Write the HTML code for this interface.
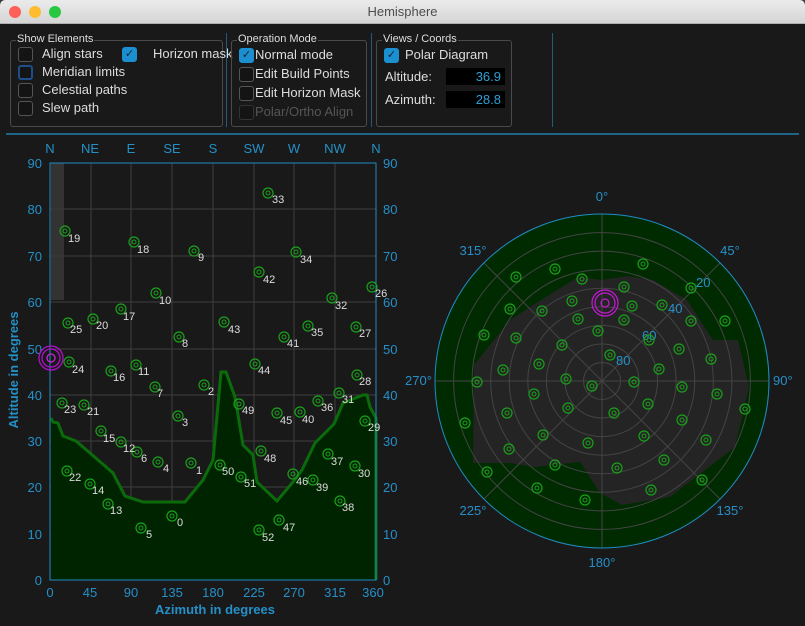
<!DOCTYPE html>
<html><head><meta charset="utf-8"><style>
body{margin:0;width:805px;height:626px;background:#3a3a3a;font-family:"Liberation Sans",sans-serif;overflow:hidden;position:relative}
.win{position:absolute;left:0;top:0;width:805px;height:626px;background:#191919;border-radius:5px 5px 0 0;overflow:hidden}
.title{position:absolute;left:0;top:0;width:805px;height:23px;background:linear-gradient(#ebebeb,#d5d5d5);border-bottom:1px solid #b0b0b0;text-align:center;font-size:13px;line-height:23px;color:#4d4d4d}
.dot{position:absolute;top:6px;width:12px;height:12px;border-radius:50%}
.box{position:absolute;border:1px solid #4a4a4a;border-radius:3px}
.lg{position:absolute;top:-8px;left:5px;background:#191919;color:#ddd;font-size:11px;padding:0 1px}
.cb{position:absolute;width:13px;height:13px;border:1px solid #555;border-radius:3px;background:#141414}
.cb.on{background:#1b8fcf;border-color:#1b8fcf;color:#123;font-size:11px;line-height:13px;text-align:center}
.t{position:absolute;color:#ddd;font-size:13px;white-space:nowrap}
.fld{position:absolute;background:#000;color:#2a9fd6;font-size:13px;text-align:right;padding-right:4px;box-sizing:border-box;height:17px;line-height:17px;width:59px}
.vl{position:absolute;top:33px;width:1px;height:94px;background:#1f5d7a}
</style></head><body><div class="win">
<div class="title">Hemisphere</div>
<div class="dot" style="left:9px;background:#fe5f57"></div>
<div class="dot" style="left:29px;background:#febc2e"></div>
<div class="dot" style="left:49px;background:#28c840"></div>

<div class="box" style="left:10px;top:40px;width:211px;height:85px"><span class="lg">Show Elements</span></div>
<div class="cb" style="left:18px;top:47px"></div><div class="t" style="left:42px;top:46px">Align stars</div>
<div class="cb on" style="left:122px;top:47px">✓</div><div class="t" style="left:153px;top:46px">Horizon mask</div>
<div class="cb" style="left:18px;top:65px;border:2px solid #1d4d8a;width:11px;height:11px"></div><div class="t" style="left:42px;top:64px">Meridian limits</div>
<div class="cb" style="left:18px;top:83px"></div><div class="t" style="left:42px;top:82px">Celestial paths</div>
<div class="cb" style="left:18px;top:101px"></div><div class="t" style="left:42px;top:100px">Slew path</div>
<div class="vl" style="left:226px"></div>
<div class="box" style="left:231px;top:40px;width:134px;height:85px"><span class="lg">Operation Mode</span></div>
<div class="cb on" style="left:239px;top:48px">✓</div><div class="t" style="left:255px;top:47px">Normal mode</div>
<div class="cb" style="left:239px;top:67px"></div><div class="t" style="left:255px;top:66px">Edit Build Points</div>
<div class="cb" style="left:239px;top:86px"></div><div class="t" style="left:255px;top:85px">Edit Horizon Mask</div>
<div class="cb" style="left:239px;top:105px;border-color:#333"></div><div class="t" style="left:255px;top:104px;color:#555">Polar/Ortho Align</div>
<div class="vl" style="left:371px"></div>
<div class="box" style="left:376px;top:40px;width:134px;height:85px"><span class="lg">Views / Coords</span></div>
<div class="cb on" style="left:384px;top:48px">✓</div><div class="t" style="left:405px;top:47px">Polar Diagram</div>
<div class="t" style="left:385px;top:69px">Altitude:</div><div class="fld" style="left:446px;top:68px">36.9</div>
<div class="t" style="left:385px;top:92px">Azimuth:</div><div class="fld" style="left:446px;top:91px">28.8</div>
<div class="vl" style="left:552px"></div>
<div style="position:absolute;left:6px;top:133px;width:793px;height:2px;background:#1f6487"></div>

<svg width="805" height="626" style="position:absolute;left:0;top:0" font-family="Liberation Sans, DejaVu Sans, sans-serif">
<g stroke="#3e3e3e" stroke-width="1">
<line x1="50" y1="163" x2="376" y2="163"/><line x1="50" y1="209" x2="376" y2="209"/><line x1="50" y1="256" x2="376" y2="256"/><line x1="50" y1="302" x2="376" y2="302"/><line x1="50" y1="349" x2="376" y2="349"/><line x1="50" y1="395" x2="376" y2="395"/><line x1="50" y1="441" x2="376" y2="441"/><line x1="50" y1="487" x2="376" y2="487"/><line x1="50" y1="534" x2="376" y2="534"/>
<line x1="91" y1="163" x2="91" y2="580"/><line x1="131" y1="163" x2="131" y2="580"/><line x1="172" y1="163" x2="172" y2="580"/><line x1="213" y1="163" x2="213" y2="580"/><line x1="254" y1="163" x2="254" y2="580"/><line x1="294" y1="163" x2="294" y2="580"/><line x1="335" y1="163" x2="335" y2="580"/>
</g>
<rect x="51" y="163" width="13" height="137" fill="#3a3a3a" opacity="0.8"/>
<polygon fill="#002400" points="51,418 53,422 58,423 63,436 76,441 90,453 113,473 125,496 143,502 185,502 203,480 213,460 221,372 226,372 235,397 243,445 253,455 257,482 277,501 293,482 302,470 315,443 334,424 343,403 363,395 367,395 370,407 376,418 376,580 51,580"/>
<polyline fill="none" stroke="#0b6b0b" stroke-width="3" points="51,418 53,422 58,423 63,436 76,441 90,453 113,473 125,496 143,502 185,502 203,480 213,460 221,372 226,372 235,397 243,445 253,455 257,482 277,501 293,482 302,470 315,443 334,424 343,403 363,395 367,395 370,407 376,418 376,580"/>
<rect x="50" y="163" width="326" height="417" fill="none" stroke="#1f8cc4" stroke-width="1"/>
<g fill="#2590c8" font-size="13">
<g text-anchor="middle"><text x="50" y="153">N</text><text x="90" y="153">NE</text><text x="131" y="153">E</text><text x="172" y="153">SE</text><text x="213" y="153">S</text><text x="254" y="153">SW</text><text x="294" y="153">W</text><text x="335" y="153">NW</text><text x="376" y="153">N</text>
<text x="50" y="597">0</text><text x="90" y="597">45</text><text x="131" y="597">90</text><text x="172" y="597">135</text><text x="213" y="597">180</text><text x="254" y="597">225</text><text x="294" y="597">270</text><text x="335" y="597">315</text><text x="373" y="597">360</text></g>
<g text-anchor="end"><text x="42" y="168">90</text><text x="42" y="214">80</text><text x="42" y="261">70</text><text x="42" y="307">60</text><text x="42" y="354">50</text><text x="42" y="400">40</text><text x="42" y="446">30</text><text x="42" y="492">20</text><text x="42" y="539">10</text><text x="42" y="585">0</text></g>
<g><text x="383" y="168">90</text><text x="383" y="214">80</text><text x="383" y="261">70</text><text x="383" y="307">60</text><text x="383" y="354">50</text><text x="383" y="400">40</text><text x="383" y="446">30</text><text x="383" y="492">20</text><text x="383" y="539">10</text><text x="383" y="585">0</text></g>
<text x="215" y="614" text-anchor="middle" font-weight="bold">Azimuth in degrees</text>
<text transform="translate(18,370) rotate(-90)" text-anchor="middle" font-weight="bold">Altitude in degrees</text>
</g>
<g fill="none" stroke="#b010c8" stroke-width="1.3"><circle cx="51" cy="358" r="12"/><circle cx="51" cy="358" r="9"/><circle cx="51" cy="358" r="4" stroke="#d020e0"/></g>
<g id="pts" fill="none" stroke="#1a9a1a" stroke-width="1.2">
</g>
<g fill="#ddd" font-size="11">
<script></script>
</g>
<!-- left plot points -->
<g fill="none" stroke="#1aa01a" stroke-width="1.2">
<circle cx="65" cy="231" r="5"/><circle cx="134" cy="242" r="5"/><circle cx="194" cy="251" r="5"/><circle cx="268" cy="193" r="5"/><circle cx="296" cy="252" r="5"/><circle cx="259" cy="272" r="5"/><circle cx="372" cy="287" r="5"/><circle cx="156" cy="293" r="5"/><circle cx="332" cy="298" r="5"/><circle cx="121" cy="309" r="5"/><circle cx="93" cy="319" r="5"/><circle cx="68" cy="323" r="5"/><circle cx="224" cy="322" r="5"/><circle cx="308" cy="326" r="5"/><circle cx="356" cy="327" r="5"/><circle cx="179" cy="337" r="5"/><circle cx="284" cy="337" r="5"/><circle cx="69" cy="362" r="5"/><circle cx="111" cy="371" r="5"/><circle cx="136" cy="365" r="5"/><circle cx="255" cy="364" r="5"/><circle cx="357" cy="375" r="5"/><circle cx="155" cy="387" r="5"/><circle cx="204" cy="385" r="5"/><circle cx="339" cy="393" r="5"/><circle cx="62" cy="403" r="5"/><circle cx="84" cy="405" r="5"/><circle cx="239" cy="404" r="5"/><circle cx="318" cy="401" r="5"/><circle cx="178" cy="416" r="5"/><circle cx="277" cy="413" r="5"/><circle cx="300" cy="412" r="5"/><circle cx="365" cy="421" r="5"/><circle cx="101" cy="431" r="5"/><circle cx="121" cy="442" r="5"/><circle cx="137" cy="452" r="5"/><circle cx="158" cy="462" r="5"/><circle cx="191" cy="463" r="5"/><circle cx="220" cy="465" r="5"/><circle cx="261" cy="451" r="5"/><circle cx="328" cy="454" r="5"/><circle cx="355" cy="466" r="5"/><circle cx="67" cy="471" r="5"/><circle cx="90" cy="484" r="5"/><circle cx="241" cy="477" r="5"/><circle cx="293" cy="474" r="5"/><circle cx="313" cy="480" r="5"/><circle cx="108" cy="504" r="5"/><circle cx="340" cy="501" r="5"/><circle cx="172" cy="516" r="5"/><circle cx="141" cy="528" r="5"/><circle cx="279" cy="520" r="5"/><circle cx="259" cy="530" r="5"/>
</g>
<g fill="none" stroke="#1aa01a" stroke-width="1">
<circle cx="65" cy="231" r="2"/><circle cx="134" cy="242" r="2"/><circle cx="194" cy="251" r="2"/><circle cx="268" cy="193" r="2"/><circle cx="296" cy="252" r="2"/><circle cx="259" cy="272" r="2"/><circle cx="372" cy="287" r="2"/><circle cx="156" cy="293" r="2"/><circle cx="332" cy="298" r="2"/><circle cx="121" cy="309" r="2"/><circle cx="93" cy="319" r="2"/><circle cx="68" cy="323" r="2"/><circle cx="224" cy="322" r="2"/><circle cx="308" cy="326" r="2"/><circle cx="356" cy="327" r="2"/><circle cx="179" cy="337" r="2"/><circle cx="284" cy="337" r="2"/><circle cx="69" cy="362" r="2"/><circle cx="111" cy="371" r="2"/><circle cx="136" cy="365" r="2"/><circle cx="255" cy="364" r="2"/><circle cx="357" cy="375" r="2"/><circle cx="155" cy="387" r="2"/><circle cx="204" cy="385" r="2"/><circle cx="339" cy="393" r="2"/><circle cx="62" cy="403" r="2"/><circle cx="84" cy="405" r="2"/><circle cx="239" cy="404" r="2"/><circle cx="318" cy="401" r="2"/><circle cx="178" cy="416" r="2"/><circle cx="277" cy="413" r="2"/><circle cx="300" cy="412" r="2"/><circle cx="365" cy="421" r="2"/><circle cx="101" cy="431" r="2"/><circle cx="121" cy="442" r="2"/><circle cx="137" cy="452" r="2"/><circle cx="158" cy="462" r="2"/><circle cx="191" cy="463" r="2"/><circle cx="220" cy="465" r="2"/><circle cx="261" cy="451" r="2"/><circle cx="328" cy="454" r="2"/><circle cx="355" cy="466" r="2"/><circle cx="67" cy="471" r="2"/><circle cx="90" cy="484" r="2"/><circle cx="241" cy="477" r="2"/><circle cx="293" cy="474" r="2"/><circle cx="313" cy="480" r="2"/><circle cx="108" cy="504" r="2"/><circle cx="340" cy="501" r="2"/><circle cx="172" cy="516" r="2"/><circle cx="141" cy="528" r="2"/><circle cx="279" cy="520" r="2"/><circle cx="259" cy="530" r="2"/>
</g>
<g fill="#ddd" font-size="11">
<text x="68" y="242">19</text><text x="137" y="253">18</text><text x="198" y="261">9</text><text x="272" y="203">33</text><text x="300" y="263">34</text><text x="263" y="283">42</text><text x="375" y="297">26</text><text x="159" y="304">10</text><text x="335" y="309">32</text><text x="123" y="320">17</text><text x="96" y="329">20</text><text x="70" y="333">25</text><text x="228" y="333">43</text><text x="311" y="336">35</text><text x="359" y="337">27</text><text x="182" y="347">8</text><text x="287" y="347">41</text><text x="72" y="373">24</text><text x="113" y="381">16</text><text x="138" y="375">11</text><text x="258" y="374">44</text><text x="359" y="385">28</text><text x="157" y="397">7</text><text x="208" y="395">2</text><text x="342" y="403">31</text><text x="64" y="413">23</text><text x="87" y="415">21</text><text x="242" y="414">49</text><text x="321" y="411">36</text><text x="182" y="426">3</text><text x="280" y="424">45</text><text x="302" y="423">40</text><text x="368" y="431">29</text><text x="103" y="442">15</text><text x="123" y="452">12</text><text x="141" y="462">6</text><text x="163" y="472">4</text><text x="196" y="474">1</text><text x="222" y="475">50</text><text x="264" y="462">48</text><text x="331" y="465">37</text><text x="358" y="477">30</text><text x="69" y="481">22</text><text x="92" y="494">14</text><text x="244" y="487">51</text><text x="296" y="485">46</text><text x="316" y="491">39</text><text x="110" y="514">13</text><text x="342" y="511">38</text><text x="177" y="526">0</text><text x="146" y="538">5</text><text x="283" y="531">47</text><text x="262" y="541">52</text>
</g>

<!-- polar -->
<circle cx="602" cy="381" r="167" fill="#002b00"/>
<polygon fill="#242424" points="602,280 627,276 653,280 687,300 713,340 738,340 749,387 735,447 670,497 622,505 600,493 580,462 535,467 510,463 473,463 474,365 510,320 533,305 578,277"/>
<g fill="none" stroke="#444" stroke-width="1">
<circle cx="602" cy="381" r="18.5"/><circle cx="602" cy="381" r="37"/><circle cx="602" cy="381" r="55.6"/><circle cx="602" cy="381" r="74.2"/><circle cx="602" cy="381" r="92.8"/><circle cx="602" cy="381" r="111.3"/><circle cx="602" cy="381" r="129.9"/><circle cx="602" cy="381" r="148.4"/>
<line x1="602" y1="214" x2="602" y2="548"/><line x1="435" y1="381" x2="769" y2="381"/><line x1="484" y1="263" x2="720" y2="499"/><line x1="720" y1="263" x2="484" y2="499"/>
</g>
<circle cx="602" cy="381" r="167" fill="none" stroke="#1f8cc4" stroke-width="1"/>
<g fill="#2590c8" font-size="13">
<text x="602" y="201" text-anchor="middle">0°</text><text x="730" y="255" text-anchor="middle">45°</text><text x="773" y="385">90°</text><text x="730" y="515" text-anchor="middle">135°</text><text x="602" y="567" text-anchor="middle">180°</text><text x="473" y="515" text-anchor="middle">225°</text><text x="405" y="385">270°</text><text x="473" y="255" text-anchor="middle">315°</text>
<text x="696" y="287">20</text><text x="668" y="313">40</text><text x="642" y="340">60</text><text x="616" y="365">80</text>
</g>
<g fill="none" stroke="#1aa01a" stroke-width="1.2">
<circle cx="643" cy="264" r="5"/><circle cx="555" cy="269" r="5"/><circle cx="516" cy="277" r="5"/><circle cx="582" cy="279" r="5"/><circle cx="624" cy="287" r="5"/><circle cx="691" cy="288" r="5"/><circle cx="572" cy="301" r="5"/><circle cx="632" cy="306" r="5"/><circle cx="662" cy="305" r="5"/><circle cx="510" cy="309" r="5"/><circle cx="542" cy="311" r="5"/><circle cx="578" cy="319" r="5"/><circle cx="624" cy="320" r="5"/><circle cx="691" cy="321" r="5"/><circle cx="725" cy="321" r="5"/><circle cx="484" cy="335" r="5"/><circle cx="598" cy="331" r="5"/><circle cx="516" cy="338" r="5"/><circle cx="649" cy="340" r="5"/><circle cx="562" cy="345" r="5"/><circle cx="679" cy="349" r="5"/><circle cx="610" cy="355" r="5"/><circle cx="711" cy="359" r="5"/><circle cx="539" cy="364" r="5"/><circle cx="659" cy="369" r="5"/><circle cx="503" cy="370" r="5"/><circle cx="477" cy="382" r="5"/><circle cx="566" cy="379" r="5"/><circle cx="634" cy="382" r="5"/><circle cx="592" cy="386" r="5"/><circle cx="682" cy="387" r="5"/><circle cx="534" cy="394" r="5"/><circle cx="717" cy="394" r="5"/><circle cx="745" cy="409" r="5"/><circle cx="507" cy="413" r="5"/><circle cx="568" cy="408" r="5"/><circle cx="614" cy="413" r="5"/><circle cx="648" cy="404" r="5"/><circle cx="682" cy="420" r="5"/><circle cx="465" cy="423" r="5"/><circle cx="543" cy="435" r="5"/><circle cx="644" cy="436" r="5"/><circle cx="588" cy="443" r="5"/><circle cx="706" cy="440" r="5"/><circle cx="509" cy="449" r="5"/><circle cx="664" cy="460" r="5"/><circle cx="555" cy="465" r="5"/><circle cx="617" cy="468" r="5"/><circle cx="487" cy="472" r="5"/><circle cx="702" cy="480" r="5"/><circle cx="537" cy="488" r="5"/><circle cx="651" cy="490" r="5"/><circle cx="585" cy="500" r="5"/>
</g>
<g fill="none" stroke="#1aa01a" stroke-width="1">
<circle cx="643" cy="264" r="2"/><circle cx="555" cy="269" r="2"/><circle cx="516" cy="277" r="2"/><circle cx="582" cy="279" r="2"/><circle cx="624" cy="287" r="2"/><circle cx="691" cy="288" r="2"/><circle cx="572" cy="301" r="2"/><circle cx="632" cy="306" r="2"/><circle cx="662" cy="305" r="2"/><circle cx="510" cy="309" r="2"/><circle cx="542" cy="311" r="2"/><circle cx="578" cy="319" r="2"/><circle cx="624" cy="320" r="2"/><circle cx="691" cy="321" r="2"/><circle cx="725" cy="321" r="2"/><circle cx="484" cy="335" r="2"/><circle cx="598" cy="331" r="2"/><circle cx="516" cy="338" r="2"/><circle cx="649" cy="340" r="2"/><circle cx="562" cy="345" r="2"/><circle cx="679" cy="349" r="2"/><circle cx="610" cy="355" r="2"/><circle cx="711" cy="359" r="2"/><circle cx="539" cy="364" r="2"/><circle cx="659" cy="369" r="2"/><circle cx="503" cy="370" r="2"/><circle cx="477" cy="382" r="2"/><circle cx="566" cy="379" r="2"/><circle cx="634" cy="382" r="2"/><circle cx="592" cy="386" r="2"/><circle cx="682" cy="387" r="2"/><circle cx="534" cy="394" r="2"/><circle cx="717" cy="394" r="2"/><circle cx="745" cy="409" r="2"/><circle cx="507" cy="413" r="2"/><circle cx="568" cy="408" r="2"/><circle cx="614" cy="413" r="2"/><circle cx="648" cy="404" r="2"/><circle cx="682" cy="420" r="2"/><circle cx="465" cy="423" r="2"/><circle cx="543" cy="435" r="2"/><circle cx="644" cy="436" r="2"/><circle cx="588" cy="443" r="2"/><circle cx="706" cy="440" r="2"/><circle cx="509" cy="449" r="2"/><circle cx="664" cy="460" r="2"/><circle cx="555" cy="465" r="2"/><circle cx="617" cy="468" r="2"/><circle cx="487" cy="472" r="2"/><circle cx="702" cy="480" r="2"/><circle cx="537" cy="488" r="2"/><circle cx="651" cy="490" r="2"/><circle cx="585" cy="500" r="2"/>
</g>
<g fill="none" stroke="#c818d8" stroke-width="1.2"><circle cx="605" cy="303" r="13"/><circle cx="605" cy="303" r="10"/><circle cx="605" cy="303" r="4"/></g>
</svg>
</div></body></html>
